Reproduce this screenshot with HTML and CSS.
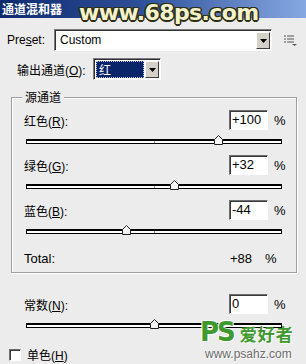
FILE: index.html
```html
<!DOCTYPE html>
<html lang="zh">
<head>
    <meta charset="UTF-8">
    <title>通道混和器</title>
    <link rel="stylesheet" href="styles.css">
</head>
<body>

<div class="dialog">
    <div class="titlebar">通道混和器</div>
    <div class="site-mark">www.68ps.com</div>

    <div class="preset-row">
        <span class="label">Pre<u>s</u>et:</span>
        <div class="select preset-select">
            <span class="select-text">Custom</span>
            <span class="drop-btn"><svg width="7" height="4" viewBox="0 0 7 4"><path d="M0 0h7L3.5 4z" fill="#000"/></svg></span>
        </div>
        <svg class="menu-icon" width="13" height="11" viewBox="0 0 13 11">
            <path d="M0 1h2M3 1h7M0 4h2M3 4h7M0 7h2M3 7h7" stroke="#555" stroke-width="1.2" fill="none"/>
            <path d="M8 9h5l-2.5 2z" fill="#555"/>
        </svg>
    </div>

    <div class="output-row">
        <span class="label">输出通道(<u>O</u>):</span>
        <div class="select output-select">
            <span class="select-text selected">红</span>
            <span class="drop-btn"><svg width="7" height="4" viewBox="0 0 7 4"><path d="M0 0h7L3.5 4z" fill="#000"/></svg></span>
        </div>
    </div>

    <div class="group">
        <span class="legend">源通道</span>

        <div class="channel">
            <div class="ch-row">
                <span class="ch-label">红色(<u>R</u>):</span>
                <span class="num-input">+100</span>
                <span class="pct">%</span>
            </div>
            <div class="slider">
                <span class="tick"></span>
                <svg class="thumb" style="left: 192px" width="9" height="10" viewBox="0 0 9 10"><path d="M0.5 4.5L4.5 0.5L8.5 4.5V9.5H0.5Z" fill="#f4f4f4" stroke="#222"/></svg>
            </div>
        </div>

        <div class="channel">
            <div class="ch-row">
                <span class="ch-label">绿色(<u>G</u>):</span>
                <span class="num-input">+32</span>
                <span class="pct">%</span>
            </div>
            <div class="slider">
                <span class="tick"></span>
                <svg class="thumb" style="left: 148px" width="9" height="10" viewBox="0 0 9 10"><path d="M0.5 4.5L4.5 0.5L8.5 4.5V9.5H0.5Z" fill="#f4f4f4" stroke="#222"/></svg>
            </div>
        </div>

        <div class="channel">
            <div class="ch-row">
                <span class="ch-label">蓝色(<u>B</u>):</span>
                <span class="num-input">-44</span>
                <span class="pct">%</span>
            </div>
            <div class="slider">
                <span class="tick"></span>
                <svg class="thumb" style="left: 100px" width="9" height="10" viewBox="0 0 9 10"><path d="M0.5 4.5L4.5 0.5L8.5 4.5V9.5H0.5Z" fill="#f4f4f4" stroke="#222"/></svg>
            </div>
        </div>

        <div class="total-row">
            <span class="total-label">Total:</span>
            <span class="total-value">+88</span>
            <span class="total-pct">%</span>
        </div>
    </div>

    <div class="const">
        <div class="ch-row">
            <span class="ch-label">常数(<u>N</u>):</span>
            <span class="num-input">0</span>
            <span class="pct">%</span>
        </div>
        <div class="slider">
            <span class="tick"></span>
            <svg class="thumb" style="left: 128px" width="9" height="10" viewBox="0 0 9 10"><path d="M0.5 4.5L4.5 0.5L8.5 4.5V9.5H0.5Z" fill="#f4f4f4" stroke="#222"/></svg>
        </div>
    </div>

    <div class="mono-row">
        <span class="checkbox"></span>
        <span class="label">单色(<u>H</u>)</span>
    </div>

    <div class="ps-mark">
        <div class="ps-top">
            <span class="ps-letters">PS</span>
            <span class="ps-cn">爱好者</span>
        </div>
        <div class="ps-url">www.psahz.com</div>
    </div>
</div>

</body>
</html>
```

FILE: styles.css
```css
/* Basic reset */
* {
    margin: 0;
    padding: 0;
    box-sizing: border-box;
}

body {
    width: 306px;
    height: 364px;
    overflow: hidden;
    background-color: #ececec;
    font-family: "Liberation Sans", "Noto Sans CJK SC", sans-serif;
    font-size: 12px;
    color: #000;
}

.dialog {
    position: relative;
    width: 306px;
    height: 364px;
}

u {
    text-decoration: underline;
    text-underline-offset: 1px;
}

/* Title bar */
.titlebar {
    height: 18px;
    padding-left: 2px;
    background: linear-gradient(90deg, #0e2a6e 0%, #2d4f98 45%, #86a8e2 100%);
    color: #fff;
    font-family: "Noto Sans CJK SC", sans-serif;
    font-weight: bold;
    font-size: 12px;
    line-height: 17px;
}

/* Watermark over the title bar */
.site-mark {
    position: absolute;
    left: 79px;
    top: 0;
    font-family: "DejaVu Sans", sans-serif;
    font-weight: bold;
    font-size: 22px;
    letter-spacing: -0.6px;
    color: #f4f2cc;
    text-shadow: 1.5px 0 #2e2e12, -1.5px 0 #2e2e12, 0 1.5px #2e2e12, 0 -1.5px #2e2e12,
        1px 1px #2e2e12, -1px -1px #2e2e12, 1px -1px #2e2e12, -1px 1px #2e2e12;
}

/* Select boxes */
.select {
    display: flex;
    height: 22px;
    background-color: #fff;
    border: 1px solid;
    border-color: #7c7c7c #fff #fff #7c7c7c;
    box-shadow: inset 1px 1px #303030;
    padding: 2px 1px 1px 2px;
}

.select-text {
    flex: 1;
    line-height: 17px;
    padding-left: 3px;
}

.drop-btn {
    width: 14px;
    display: flex;
    align-items: center;
    justify-content: center;
    background-color: #d4d0c8;
    border: 1px solid;
    border-color: #fff #404040 #404040 #fff;
}

.preset-row {
    display: flex;
    align-items: center;
    height: 22px;
    margin-top: 11px;
    padding-left: 7px;
}

.preset-row .label {
    width: 47px;
}

.preset-select {
    width: 218px;
}

.menu-icon {
    margin-left: 12px;
}

.output-row {
    display: flex;
    align-items: center;
    height: 22px;
    margin-top: 7px;
    padding-left: 17px;
}

.output-row .label {
    width: 76px;
}

.output-select {
    width: 68px;
}

.output-select .select-text.selected {
    background-color: #0a246a;
    color: #fff;
    outline: 1px dotted #c8c8c8;
    outline-offset: -1px;
    font-family: "Noto Sans CJK SC", sans-serif;
    margin-right: 1px;
}

/* Group box */
.group {
    position: relative;
    width: 286px;
    height: 176px;
    margin: 17px 0 0 11px;
    padding: 12px 0 0 12px;
    border: 1px solid #a0a0a0;
    box-shadow: inset 1px 1px #fff, 1px 1px #fff;
}

.legend {
    position: absolute;
    top: -9px;
    left: 10px;
    padding: 0 3px;
    background-color: #ececec;
    font-family: "Noto Sans CJK SC", sans-serif;
    line-height: 16px;
}

.channel {
    height: 45px;
}

.ch-row {
    display: flex;
    align-items: center;
    height: 20px;
}

.ch-label {
    width: 205px;
}

.num-input {
    width: 39px;
    height: 20px;
    padding-left: 2px;
    line-height: 18px;
    background-color: #fff;
    border: 1px solid;
    border-color: #6e6e6e #fff #fff #6e6e6e;
    box-shadow: inset 1px 1px #3a3a3a;
    font-size: 13px;
}

.pct {
    margin-left: 6px;
    font-size: 13px;
}

/* Slider track */
.slider {
    position: relative;
    width: 256px;
    height: 5px;
    margin: 9px 0 0 2px;
    background-color: #fff;
    border: 1px solid #000;
    border-top-width: 2px;
}

.tick {
    position: absolute;
    left: 127px;
    top: 0;
    width: 1px;
    height: 2px;
    background-color: #9a9a9a;
}

.thumb {
    position: absolute;
    top: -6px;
    margin-left: -5px;
}

.total-row {
    display: flex;
    align-items: center;
    height: 15px;
    margin-top: 6px;
    font-size: 13px;
}

.total-label {
    width: 206px;
}

.total-value {
    width: 35px;
}

/* Constant slider */
.const {
    margin-top: 21px;
    padding-left: 24px;
}

.mono-row {
    display: flex;
    align-items: center;
    margin-top: 18px;
    padding-left: 9px;
}

.checkbox {
    width: 12px;
    height: 12px;
    background-color: #fff;
    border: 1px solid;
    border-color: #6e6e6e #fff #fff #6e6e6e;
    box-shadow: inset 1px 1px #3a3a3a;
    margin-right: 6px;
}

/* Bottom-right watermark */
.ps-mark {
    position: absolute;
    left: 200px;
    top: 322px;
}

.ps-top {
    display: flex;
    align-items: flex-start;
    height: 21px;
}

.ps-letters {
    font-family: "DejaVu Sans", sans-serif;
    font-weight: bold;
    font-size: 26px;
    line-height: 21px;
    letter-spacing: -2px;
    color: #3f9a2e;
    text-shadow: 1px 1px #fff, -1px -1px #fff;
}

.ps-cn {
    margin: 2px 0 0 6px;
    font-family: "Noto Sans CJK SC", serif;
    font-weight: bold;
    font-size: 17px;
    line-height: 20px;
    letter-spacing: 1px;
    color: #3f9a2e;
    text-shadow: 1px 1px #fff;
}

.ps-url {
    margin: 5px 0 0 5px;
    font-size: 12px;
    line-height: 12px;
    color: #6c6c6c;
    text-shadow: 1px 1px #fff;
}
```
